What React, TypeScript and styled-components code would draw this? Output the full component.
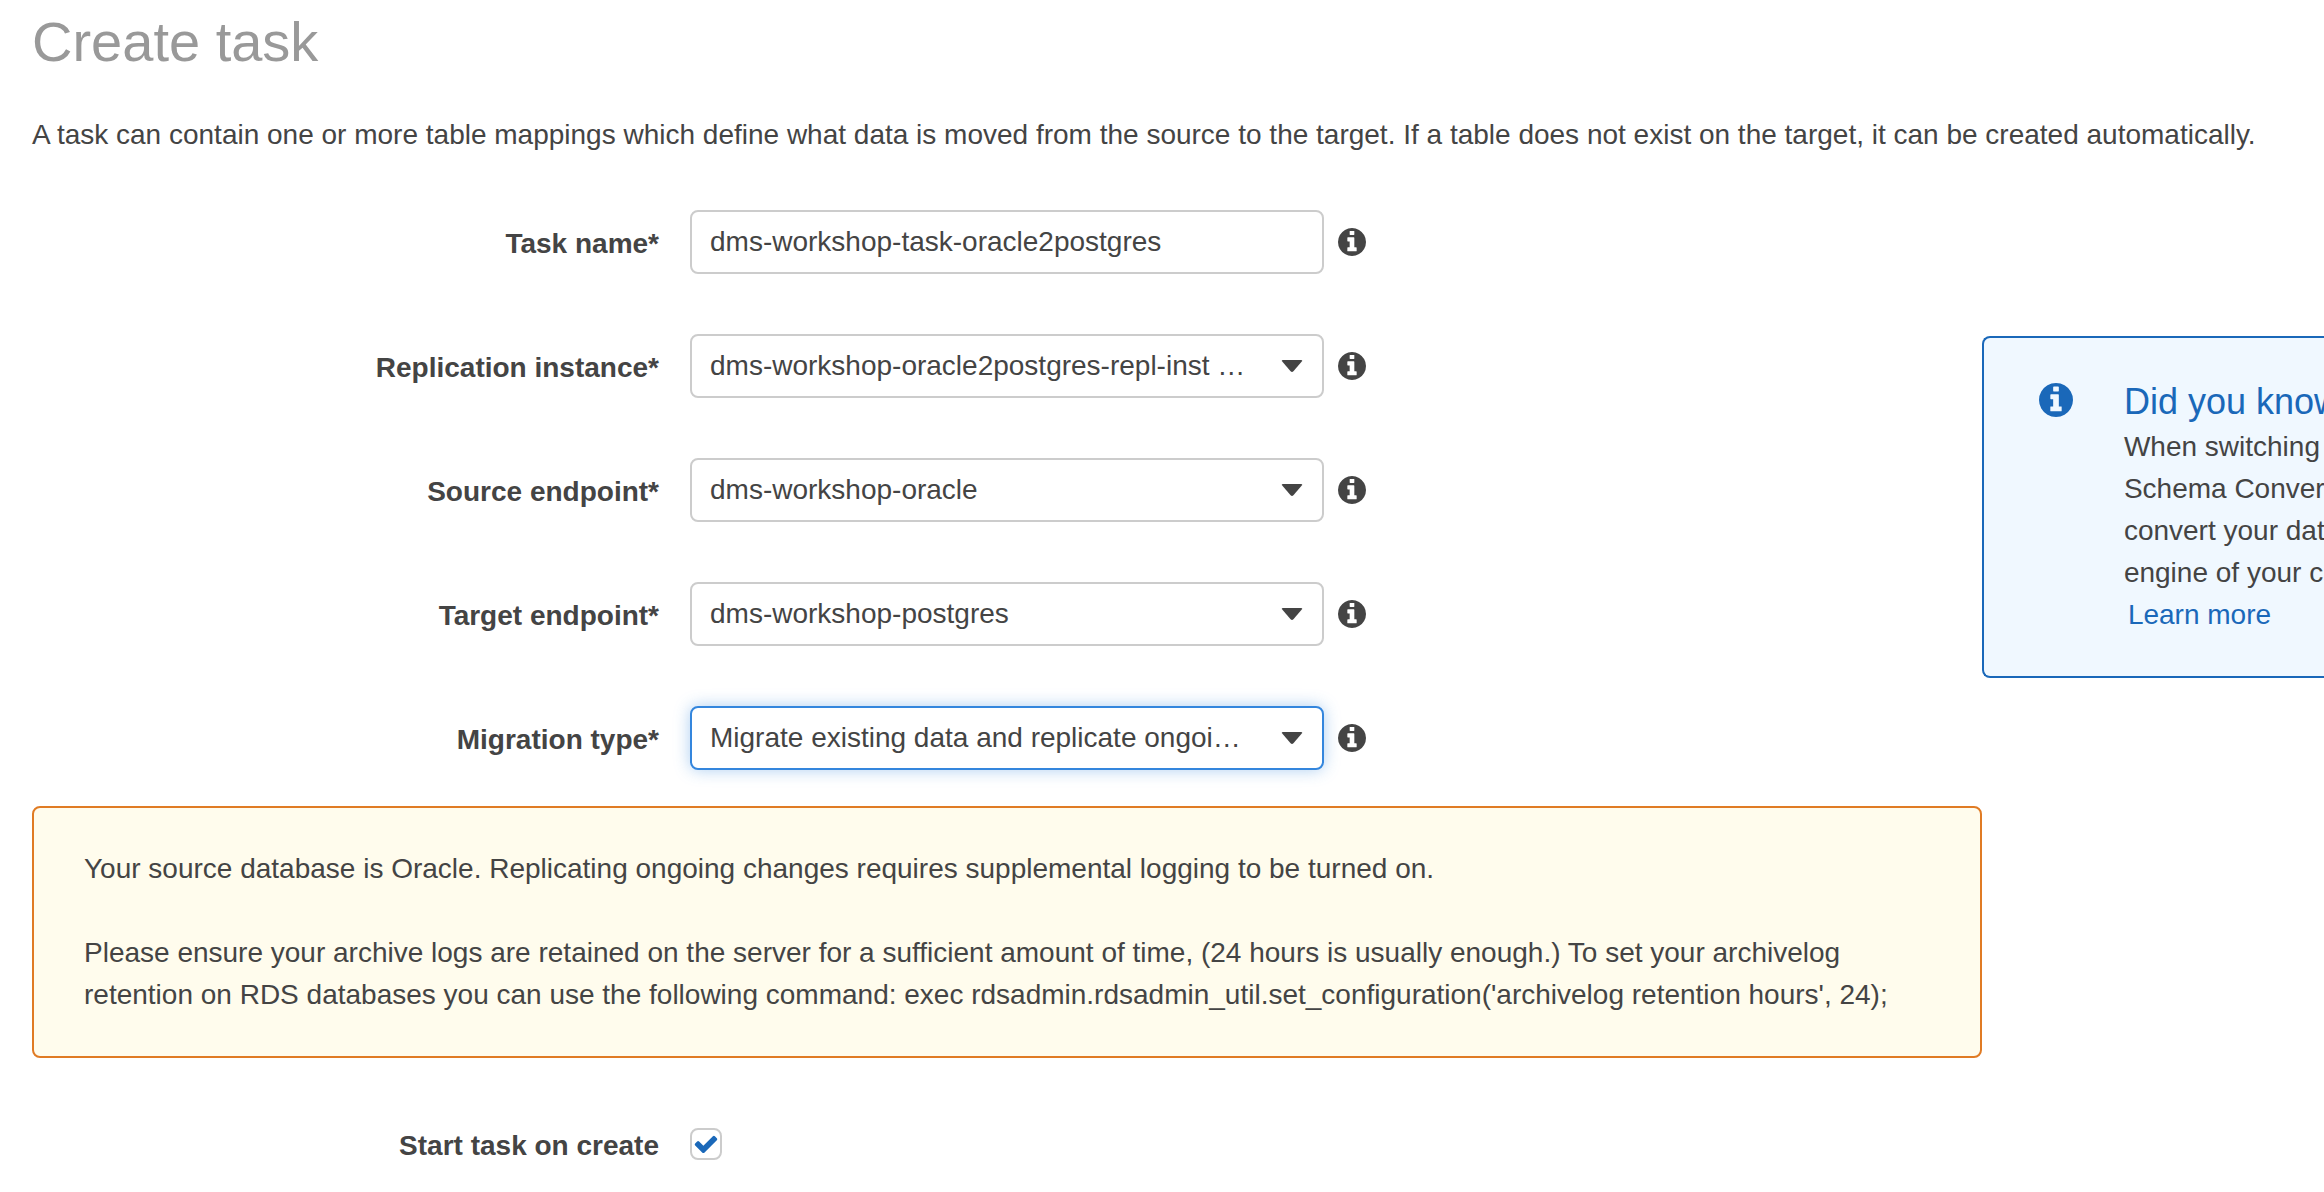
import React from "react";
import styled, { createGlobalStyle, css } from "styled-components";

const TEXT = "#444444";
const BLUE = "#1a68b9";

const GlobalStyle = createGlobalStyle`
  *, *::before, *::after { box-sizing: border-box; }
  body {
    margin: 0;
    overflow-x: hidden;
    background: #ffffff;
    color: ${TEXT};
    font: 28px/42px "Helvetica Neue", "Liberation Sans", Arial, sans-serif;
  }
`;

const Page = styled.main`
  padding: 0 0 12px 32px;
`;

const Title = styled.h1`
  margin: 0 0 30px;
  color: #999999;
  font-size: 56px;
  font-weight: 400;
  line-height: 84px;
`;

const Intro = styled.p`
  margin: 0 0 54px;
`;

const Columns = styled.div`
  display: grid;
  grid-template-columns: minmax(0, 57fr) minmax(0, 10fr);
  align-items: start;
`;

const Form = styled.form`
  display: flex;
  flex-direction: column;
`;

const Fields = styled.div`
  display: flex;
  flex-direction: column;
  gap: 60px;
`;

const Row = styled.div`
  display: flex;
  align-items: center;
  min-height: 64px;
`;

const Label = styled.label`
  flex: 0 1 627px;
  margin-right: 31px;
  padding-top: 4px;
  font-weight: 700;
  text-align: right;
`;

const FieldBox = styled.div`
  display: grid;
  flex: 0 1 634px;
  align-items: center;
`;

const control = css`
  grid-area: 1 / 1;
  width: 100%;
  height: 64px;
  margin: 0;
  padding: 0 18px;
  border: 2px solid #cccccc;
  border-radius: 8px;
  outline: none;
  background: #ffffff;
  color: ${TEXT};
  font: inherit;
`;

const TextInput = styled.input`
  ${control}
`;

const Select = styled.select<{ $active?: boolean }>`
  ${control}
  appearance: none;
  padding-right: 48px;
  text-overflow: ellipsis;
  ${({ $active }) =>
    $active &&
    css`
      border-color: #3486dd;
      box-shadow: 0 0 16px rgba(52, 134, 221, 0.4);
    `}
`;

const Caret = styled.svg`
  grid-area: 1 / 1;
  justify-self: end;
  width: 22px;
  height: 12px;
  margin-right: 21px;
  fill: ${TEXT};
  pointer-events: none;
`;

const InfoButton = styled.button`
  display: flex;
  flex: none;
  margin: 0 0 0 14px;
  padding: 0;
  border: 0;
  background: none;
  color: ${TEXT};
  cursor: pointer;
`;

const Warning = styled.section`
  display: flex;
  flex-direction: column;
  gap: 42px;
  margin: 36px 0 54px;
  padding: 40px 50px;
  border: 2px solid #e07b24;
  border-radius: 8px;
  background: #fffced;
`;

const Paragraph = styled.p`
  margin: 0;
`;

const CheckHolder = styled.div`
  display: grid;
  place-items: center;
`;

const Checkbox = styled.input`
  grid-area: 1 / 1;
  appearance: none;
  width: 32px;
  height: 32px;
  margin: 0;
  border: 2px solid #cccccc;
  border-radius: 8px;
  background: #ffffff;
`;

const CheckMark = styled.svg`
  grid-area: 1 / 1;
  width: 26px;
  height: 26px;
  fill: ${BLUE};
  opacity: 0;
  pointer-events: none;

  ${Checkbox}:checked + & {
    opacity: 1;
  }
`;

const Tip = styled.aside`
  display: flex;
  gap: 51px;
  margin-top: 126px;
  padding: 40px 0 40px 55px;
  overflow: hidden;
  border: 2px solid ${BLUE};
  border-right: 0;
  border-radius: 8px 0 0 8px;
  background: #f0f8ff;
  color: ${BLUE};
`;

const TipIcon = styled.div`
  display: flex;
  flex: none;
  align-items: center;
  height: 44px;
`;

const TipBody = styled.div`
  min-width: 0;
  white-space: nowrap;
`;

const TipTitle = styled.h2`
  margin: 0;
  font-size: 36px;
  font-weight: 400;
  line-height: 48px;
`;

const TipText = styled.p`
  margin: 0;
  color: ${TEXT};
`;

const TipLink = styled.a`
  margin-left: 4px;
  color: ${BLUE};
  text-decoration: none;
`;

function InfoIcon({ size }: { size: number }) {
  return (
    <svg width={size} height={size} viewBox="0 0 1536 1536" fill="currentColor" aria-hidden="true">
      <path d="M1024 1248v-160q0-14-9-23t-23-9h-96v-512q0-14-9-23t-23-9h-320q-14 0-23 9t-9 23v160q0 14 9 23t23 9h96v320h-96q-14 0-23 9t-9 23v160q0 14 9 23t23 9h448q14 0 23-9t9-23zM896 352v-160q0-14-9-23t-23-9h-192q-14 0-23 9t-9 23v160q0 14 9 23t23 9h192q14 0 23-9t9-23zM1536 768q0 209-103 385.5t-279.5 279.5-385.5 103-385.5-103-279.5-279.5-103-385.5 103-385.5 279.5-279.5 385.5-103 385.5 103 279.5 279.5 103 385.5z" />
    </svg>
  );
}

interface SelectFieldProps {
  id: string;
  label: string;
  value: string;
  active?: boolean;
}

function SelectField({ id, label, value, active }: SelectFieldProps) {
  return (
    <Row>
      <Label htmlFor={id}>{label}*</Label>
      <FieldBox>
        <Select id={id} defaultValue={value} $active={active}>
          <option value={value}>{value}</option>
        </Select>
        <Caret viewBox="0 0 22 12" aria-hidden="true">
          <path d="M2 0h18q2 0 .8 1.6l-8.4 9.6q-1.4 1.4-2.8 0L1.2 1.6Q0 0 2 0z" />
        </Caret>
      </FieldBox>
      <InfoButton type="button" aria-label={`About ${label}`}>
        <InfoIcon size={28} />
      </InfoButton>
    </Row>
  );
}

export default function App() {
  return (
    <>
      <GlobalStyle />
      <Page>
        <Title>Create task</Title>
        <Intro>
          A task can contain one or more table mappings which define what data is moved from the
          source to the target. If a table does not exist on the target, it can be created
          automatically.
        </Intro>
        <Columns>
          <Form>
            <Fields>
              <Row>
                <Label htmlFor="task-name">Task name*</Label>
                <FieldBox>
                  <TextInput
                    id="task-name"
                    type="text"
                    defaultValue="dms-workshop-task-oracle2postgres"
                  />
                </FieldBox>
                <InfoButton type="button" aria-label="About Task name">
                  <InfoIcon size={28} />
                </InfoButton>
              </Row>
              <SelectField
                id="replication-instance"
                label="Replication instance"
                value="dms-workshop-oracle2postgres-repl-inst …"
              />
              <SelectField id="source" label="Source endpoint" value="dms-workshop-oracle" />
              <SelectField id="target" label="Target endpoint" value="dms-workshop-postgres" />
              <SelectField
                id="migration-type"
                label="Migration type"
                value="Migrate existing data and replicate ongoi…"
                active
              />
            </Fields>
            <Warning>
              <Paragraph>
                Your source database is Oracle. Replicating ongoing changes requires supplemental
                logging to be turned on.
              </Paragraph>
              <Paragraph>
                Please ensure your archive logs are retained on the server for a sufficient amount
                of time, (24 hours is usually enough.) To set your archivelog retention on RDS
                databases you can use the following command: exec
                rdsadmin.rdsadmin_util.set_configuration('archivelog retention hours', 24);
              </Paragraph>
            </Warning>
            <Row>
              <Label htmlFor="start-task">Start task on create</Label>
              <CheckHolder>
                <Checkbox id="start-task" type="checkbox" defaultChecked />
                <CheckMark viewBox="0 0 1792 1792" aria-hidden="true">
                  <path d="M1671 566q0 40-28 68l-724 724-136 136q-28 28-68 28t-68-28l-136-136-362-362q-28-28-28-68t28-68l136-136q28-28 68-28t68 28l294 295 656-657q28-28 68-28t68 28l136 136q28 28 28 68z" />
                </CheckMark>
              </CheckHolder>
            </Row>
          </Form>
          <Tip>
            <TipIcon>
              <InfoIcon size={34} />
            </TipIcon>
            <TipBody>
              <TipTitle>Did you know</TipTitle>
              <TipText>
                When switching
                <br />
                Schema Conver
                <br />
                convert your dat
                <br />
                engine of your c
              </TipText>
              <TipLink href="#learn-more">Learn more</TipLink>
            </TipBody>
          </Tip>
        </Columns>
      </Page>
    </>
  );
}
